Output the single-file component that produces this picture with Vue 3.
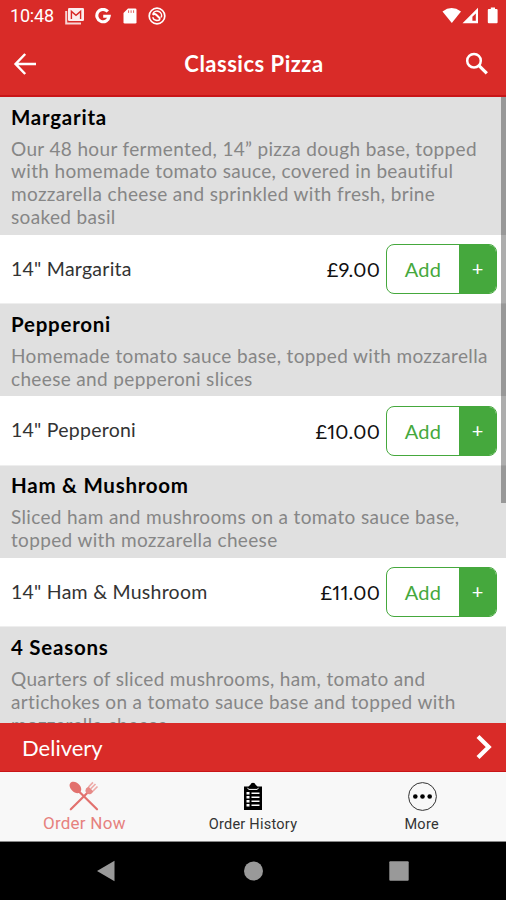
<script setup>
const sections = [
  {
    name: 'Margarita',
    lines: ['Our 48 hour fermented, 14” pizza dough base, topped', 'with homemade tomato sauce, covered in beautiful', 'mozzarella cheese and sprinkled with fresh, brine', 'soaked basil'],
    item: '14" Margarita',
    price: '£9.00',
  },
  {
    name: 'Pepperoni',
    lines: ['Homemade tomato sauce base, topped with mozzarella', 'cheese and pepperoni slices'],
    item: '14" Pepperoni',
    price: '£10.00',
  },
  {
    name: 'Ham & Mushroom',
    lines: ['Sliced ham and mushrooms on a tomato sauce base,', 'topped with mozzarella cheese'],
    item: '14" Ham & Mushroom',
    price: '£11.00',
  },
  {
    name: '4 Seasons',
    lines: ['Quarters of sliced mushrooms, ham, tomato and', 'artichokes on a tomato sauce base and topped with', 'mozzarella cheese'],
  },
]
</script>

<template>
  <div class="screen">
    <div class="status">
      <span class="clock">10:48</span>
      <svg class="s-mail" width="20" height="18" viewBox="0 0 20 18">
        <path d="M1.2 4v12.500H16" fill="none" stroke="#fff" stroke-width="2" opacity=".8" />
        <rect x="3" y="1" width="16" height="13" rx="1.200" fill="#fff" opacity=".92" />
        <path d="M6.400 12V4.400l4.600 4 4.600-4V12" fill="none" stroke="#d92b28" stroke-width="1.400" />
      </svg>
      <svg class="s-g" width="16" height="16" viewBox="0 0 16 16">
        <path d="M12.800 3.600A6.200 6.200 0 1 0 14.200 8.200H8.200" fill="none" stroke="#fff" stroke-width="3.100" />
      </svg>
      <svg class="s-sd" width="14" height="16" viewBox="0 0 14 16">
        <path d="M5 0.500h7.200a1.300 1.300 0 0 1 1.300 1.300v12.400a1.300 1.300 0 0 1-1.300 1.300H1.800A1.300 1.300 0 0 1 .5 14.200V5z" fill="#fff" />
        <path d="M5.600 2.300v2.600M8.100 2.300v2.600M10.600 2.300v2.600" stroke="#e2605e" stroke-width="1" />
      </svg>
      <svg class="s-ring" width="18" height="18" viewBox="0 0 18 18" fill="none" stroke="#fff">
        <circle cx="9" cy="9" r="7.800" stroke-width="1.700" />
        <path d="M4.900 6.800a4.500 4.500 0 0 1 8.300 3.600M12.200 12.200a4.500 4.500 0 0 1-7.500-2" stroke-width="1.500" />
        <path d="M4.500 7.800q2.200-1.600 4 .2t3.800 3.800" stroke-width="2" />
      </svg>
      <span class="grow"></span>
      <svg width="57" height="18" viewBox="0 0 57 18">
        <path d="M.5 4.500Q9.500-2.300 19 4.500L9.800 16z" fill="#fff" />
        <path d="M20.500 16.300L36 .8v15.500z" fill="#fff" />
        <path d="M30.400 9.700L33.800 6.400v7.400h-3.400z" fill="#d92b28" />
        <path d="M46.800 2h2V.4h4.200V2h1.600q1 0 1 1v12.200q0 1-1 1h-7.800q-1 0-1-1V3q0-1 1-1z" fill="#fff" />
      </svg>
    </div>
    <header class="bar">
      <svg class="back" width="24" height="24" viewBox="0 0 24 24" fill="none" stroke="#fff" stroke-width="2.500">
        <path d="M23 12H3M12.200 2L2.600 12l9.600 10" />
      </svg>
      <h1>Classics Pizza</h1>
      <svg class="search" width="24" height="24" viewBox="0 0 24 24" fill="none" stroke="#fff">
        <circle cx="9" cy="8.700" r="6.800" stroke-width="2.500" />
        <path d="M14 13.700l7.800 7.700" stroke-width="3.200" />
      </svg>
    </header>
    <main class="list">
      <section v-for="s in sections" :key="s.name">
        <div class="info">
          <h2>{{ s.name }}</h2>
          <p><span v-for="l in s.lines" :key="l">{{ l }}</span></p>
        </div>
        <div v-if="s.item" class="row">
          <span class="item">{{ s.item }}</span>
          <span class="price">{{ s.price }}</span>
          <div class="button"><span class="add">Add</span><span class="plus">+</span></div>
        </div>
      </section>
      <i class="thumb"></i>
    </main>
    <div class="delivery">
      <span>Delivery</span>
      <svg width="18" height="26" viewBox="0 0 18 26"><path d="M2 2.500L12.700 13 2 23.500" fill="none" stroke="#fff" stroke-width="4.200" /></svg>
    </div>
    <nav class="tabs">
      <div class="tab active">
        <svg width="30" height="30" viewBox="0 0 30 30">
          <path d="M10 10.500L28 28.300" stroke="#e2716e" stroke-width="2.200" stroke-linecap="round" />
          <path d="M1.200 2.200C3.500-.5 8.600 1.200 10.900 4.500c2.100 3 1.500 5.800-.2 7.100-2 1.400-5.100.6-7.600-2C.8 7.200-.2 4 1.200 2.200z" fill="#e2716e" />
          <path d="M1.800 28.300L20 10.200" stroke="#e2716e" stroke-width="2.200" stroke-linecap="round" />
          <path d="M17 7.500l2.500-2 5 5-2.200 2.200q-3 1.300-5-.6-1.700-2-.3-4.600z" fill="#e78a87" />
          <path d="M19.500 6l4.500-4.600M21.500 8l5-5M24 10l4.500-4.500" stroke="#edaaa8" stroke-width="1.700" />
        </svg>
        <span>Order Now</span>
      </div>
      <div class="tab">
        <svg width="20" height="30" viewBox="0 0 20 30">
          <path d="M1 5.500h4.500L7.400 3.800a2.700 2.700 0 0 1 5.200 0l1.900 1.700H19V29H1z" fill="#000" />
          <path d="M4.500 6.800l1.200 1.600h8.600l1.200-1.600" fill="none" stroke="#fff" stroke-width="1" />
          <path d="M3.500 12.300h3M3.500 16.300h3M3.500 20.300h3M3.500 24.300h3" stroke="#fff" stroke-width="2.400" />
          <path d="M8.500 12.300h8M8.500 16.300h8M8.500 20.300h8M8.500 24.300h8" stroke="#fff" stroke-width="1.500" />
        </svg>
        <span>Order History</span>
      </div>
      <div class="tab">
        <svg width="30" height="30" viewBox="0 0 30 30">
          <circle cx="15.500" cy="15.500" r="13.900" fill="none" stroke="#333" stroke-width="1" />
          <circle cx="8.300" cy="15.500" r="2.300" /><circle cx="15.500" cy="15.500" r="2.300" /><circle cx="22.700" cy="15.500" r="2.300" />
        </svg>
        <span>More</span>
      </div>
    </nav>
    <div class="system">
      <svg width="20" height="22" viewBox="0 0 20 22"><path d="M1 11L18.500 .8v20.400z" /></svg>
      <svg width="20" height="22" viewBox="0 0 20 22"><circle cx="10.500" cy="11" r="9.500" /></svg>
      <svg width="20" height="22" viewBox="0 0 20 22"><rect x=".3" y="1.300" width="19.400" height="19.400" rx="1" /></svg>
    </div>
  </div>
</template>

<style>
body { margin: 0; }
</style>

<style scoped>
.screen { width: 506px; height: 900px; display: flex; flex-direction: column; overflow: hidden; background: #fff; font-family: Lato, "Liberation Sans", sans-serif; }
.status { height: 32px; flex: none; box-sizing: border-box; padding: 0 7px 1px 10px; display: flex; align-items: center; background: #d92b28; }
.clock { width: 55px; font: 400 18px Roboto, sans-serif; letter-spacing: -.2px; color: #fff; }
.s-g { margin-left: 10px; }
.s-sd { margin-left: 12px; }
.s-ring { margin-left: 11px; }
.grow { flex: 1; }
.bar { height: 65px; flex: none; box-sizing: border-box; border-bottom: 2px solid #c91518; background: #d92b28; display: flex; align-items: center; justify-content: space-between; padding: 0 17px 0 13px; }
h1 { margin: 0 0 0 6px; font-size: 22px; font-weight: 700; letter-spacing: .5px; color: #fff; }
.list { flex: 1; min-height: 0; overflow: hidden; position: relative; }
.info { background: #e0e0e0; padding: 5.500px 0 5.700px 11px; box-sizing: border-box; color: #000; }
h2 { margin: 0; height: 35px; line-height: 28px; font-size: 20.500px; font-weight: 700; letter-spacing: .75px; }
p { margin: 0; font-size: 19px; line-height: 22.950px; letter-spacing: .35px; color: #868686; }
p span { display: block; white-space: nowrap; }
.row { height: 69.400px; box-sizing: border-box; padding: 0 9px 0 11px; display: flex; align-items: center; background: #fff; border-bottom: 1px solid #eee; }
.item { flex: 1; margin-top: -2px; font-size: 19.500px; letter-spacing: .25px; color: #333; }
.price { font-size: 20px; font-variant-numeric: proportional-nums; letter-spacing: .2px; color: #111; margin-right: 6px; }
.button { width: 111px; height: 50px; box-sizing: border-box; display: flex; border: 1.500px solid #45a83d; border-radius: 8px; overflow: hidden; }
.add { flex: 1; line-height: 48px; text-align: center; color: #45a83d; font-size: 20px; letter-spacing: .3px; }
.plus { width: 37px; line-height: 46px; text-align: center; color: #fff; background: #45a83d; font-size: 20px; }
.thumb { position: absolute; top: 0; right: 0; width: 5px; height: 406px; background: rgba(0, 0, 0, .32); }
.delivery { height: 49px; flex: none; box-sizing: border-box; padding: 0 12px 0 22px; display: flex; align-items: center; justify-content: space-between; background: #d92b28; border-bottom: 1px solid #c91518; color: #fff; font-size: 22px; }
.tabs { height: 70px; flex: none; box-sizing: border-box; border-bottom: 1px solid #888; background: #f8f8f8; display: grid; grid-template-columns: repeat(3, 1fr); }
.tab { display: flex; flex-direction: column; align-items: center; padding-top: 9px; font: 14.500px/28px Roboto, sans-serif; letter-spacing: .25px; color: #333; }
.tab svg { flex: none; }
.tab.active { color: #e6817e; font-size: 17px; line-height: 25px; }
.system { height: 58px; flex: none; display: flex; align-items: center; justify-content: space-between; padding: 0 97px 0 96px; box-sizing: border-box; background: #000; fill: #999; }
</style>
